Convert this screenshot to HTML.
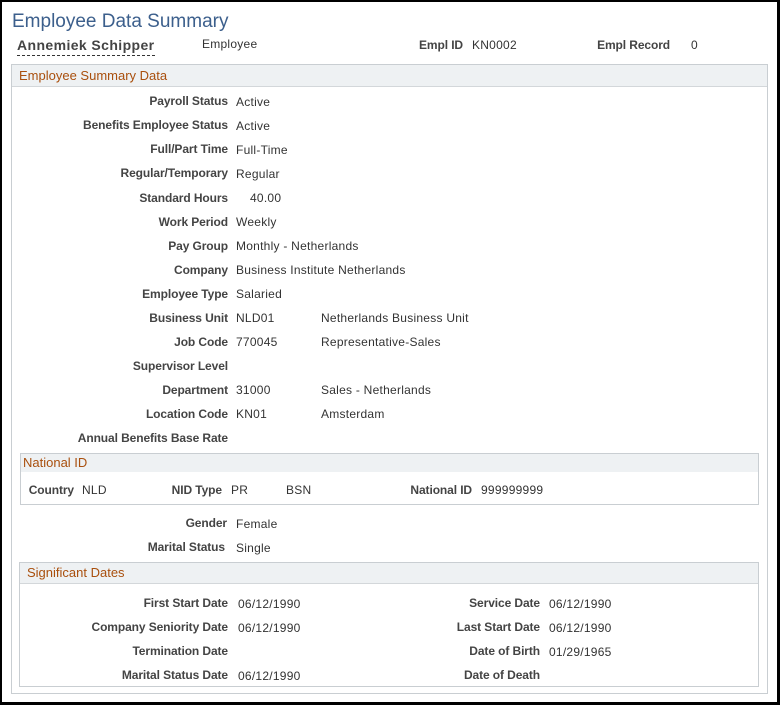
<!DOCTYPE html>
<html><head><meta charset="utf-8"><style>
*{margin:0;padding:0;box-sizing:border-box}
body{width:780px;height:705px;position:relative;font-family:"Liberation Sans",Arial,sans-serif;font-size:12px;color:#333;background:#fff;overflow:hidden}
#frame{position:absolute;left:0;top:0;width:780px;height:705px;border-top:2px solid #000;border-left:2px solid #000;border-right:3px solid #000;border-bottom:3px solid #000}
.a{position:absolute;white-space:nowrap}
.l{position:absolute;white-space:nowrap;font-weight:bold;text-align:right;color:#444;letter-spacing:-0.1px}
.v{position:absolute;white-space:nowrap;color:#333;letter-spacing:0.25px}
.box{position:absolute;border:1px solid #c9ced2}
.hd{position:absolute;background:#eef1f3;border-bottom:1px solid #d3d7da;color:#a94f0d;font-size:13px}
</style></head><body>
<div id="frame"></div>
<div class="a" style="left:12px;top:11px;font-size:19px;color:#3c5f8c">Employee Data Summary</div>
<div class="a" style="left:17px;top:37px;font-size:14px;font-weight:bold;color:#444;border-bottom:1px dashed #333;padding-bottom:2px;letter-spacing:0.4px">Annemiek Schipper</div>
<div class="v" style="left:202px;top:37px">Employee</div>
<div class="l" style="left:400px;width:63px;top:38px">Empl ID</div>
<div class="v" style="left:472px;top:38px">KN0002</div>
<div class="l" style="left:560px;width:110px;top:38px">Empl Record</div>
<div class="v" style="left:691px;top:38px">0</div>

<div class="box" style="left:11px;top:64px;width:757px;height:630px"></div>
<div class="hd" style="left:12px;top:65px;width:755px;height:22px;padding:3px 0 0 7px">Employee Summary Data</div>

<div class="l" style="left:20px;width:208px;top:94px">Payroll Status</div><div class="v" style="left:236px;top:95px">Active</div>
<div class="l" style="left:20px;width:208px;top:118px">Benefits Employee Status</div><div class="v" style="left:236px;top:119px">Active</div>
<div class="l" style="left:20px;width:208px;top:142px">Full/Part Time</div><div class="v" style="left:236px;top:143px">Full-Time</div>
<div class="l" style="left:20px;width:208px;top:166px">Regular/Temporary</div><div class="v" style="left:236px;top:167px">Regular</div>
<div class="l" style="left:20px;width:208px;top:191px">Standard Hours</div><div class="v" style="left:250px;top:191px">40.00</div>
<div class="l" style="left:20px;width:208px;top:215px">Work Period</div><div class="v" style="left:236px;top:215px">Weekly</div>
<div class="l" style="left:20px;width:208px;top:239px">Pay Group</div><div class="v" style="left:236px;top:239px">Monthly - Netherlands</div>
<div class="l" style="left:20px;width:208px;top:263px">Company</div><div class="v" style="left:236px;top:263px">Business Institute Netherlands</div>
<div class="l" style="left:20px;width:208px;top:287px">Employee Type</div><div class="v" style="left:236px;top:287px">Salaried</div>
<div class="l" style="left:20px;width:208px;top:311px">Business Unit</div><div class="v" style="left:236px;top:311px">NLD01</div><div class="v" style="left:321px;top:311px">Netherlands Business Unit</div>
<div class="l" style="left:20px;width:208px;top:335px">Job Code</div><div class="v" style="left:236px;top:335px">770045</div><div class="v" style="left:321px;top:335px">Representative-Sales</div>
<div class="l" style="left:20px;width:208px;top:359px">Supervisor Level</div>
<div class="l" style="left:20px;width:208px;top:383px">Department</div><div class="v" style="left:236px;top:383px">31000</div><div class="v" style="left:321px;top:383px">Sales - Netherlands</div>
<div class="l" style="left:20px;width:208px;top:407px">Location Code</div><div class="v" style="left:236px;top:407px">KN01</div><div class="v" style="left:321px;top:407px">Amsterdam</div>
<div class="l" style="left:20px;width:208px;top:431px">Annual Benefits Base Rate</div>

<div class="box" style="left:20px;top:453px;width:739px;height:52px"></div>
<div class="hd" style="left:21px;top:454px;width:737px;height:18px;padding:1px 0 0 2px;border-bottom:none">National ID</div>
<div class="l" style="left:20px;width:54px;top:483px">Country</div><div class="v" style="left:82px;top:483px">NLD</div>
<div class="l" style="left:150px;width:72px;top:483px">NID Type</div><div class="v" style="left:231px;top:483px">PR</div><div class="v" style="left:286px;top:483px">BSN</div>
<div class="l" style="left:380px;width:92px;top:483px">National ID</div><div class="v" style="left:481px;top:483px">999999999</div>

<div class="l" style="left:20px;width:207px;top:516px">Gender</div><div class="v" style="left:236px;top:517px">Female</div>
<div class="l" style="left:20px;width:205px;top:540px">Marital Status</div><div class="v" style="left:236px;top:541px">Single</div>

<div class="box" style="left:19px;top:562px;width:740px;height:125px"></div>
<div class="hd" style="left:20px;top:563px;width:738px;height:21px;padding:2px 0 0 7px">Significant Dates</div>
<div class="l" style="left:20px;width:208px;top:596px">First Start Date</div><div class="v" style="left:238px;top:597px">06/12/1990</div>
<div class="l" style="left:20px;width:208px;top:620px">Company Seniority Date</div><div class="v" style="left:238px;top:621px">06/12/1990</div>
<div class="l" style="left:20px;width:208px;top:644px">Termination Date</div>
<div class="l" style="left:20px;width:208px;top:668px">Marital Status Date</div><div class="v" style="left:238px;top:669px">06/12/1990</div>
<div class="l" style="left:400px;width:140px;top:596px">Service Date</div><div class="v" style="left:549px;top:597px">06/12/1990</div>
<div class="l" style="left:400px;width:140px;top:620px">Last Start Date</div><div class="v" style="left:549px;top:621px">06/12/1990</div>
<div class="l" style="left:400px;width:140px;top:644px">Date of Birth</div><div class="v" style="left:549px;top:645px">01/29/1965</div>
<div class="l" style="left:400px;width:140px;top:668px">Date of Death</div>
</body></html>
